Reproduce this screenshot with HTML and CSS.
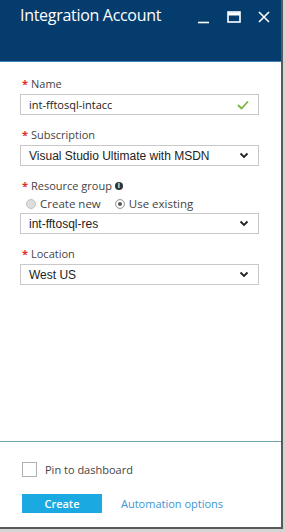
FILE: index.html
```html
<!DOCTYPE html>
<html lang="en">
<head>
    <meta charset="UTF-8">
    <title>Integration Account</title>
    <link rel="stylesheet" href="styles.css">
</head>
<body>

    <div id="blade">
        <div id="header">
            <div id="title">Integration Account</div>
            <div id="window-buttons">
                <svg width="14" height="14" viewBox="0 0 14 14"><path d="M1 12.5h11" stroke="#fff" stroke-width="1.6"/></svg>
                <svg width="14" height="14" viewBox="0 0 14 14"><rect x="1" y="2" width="12" height="10" fill="none" stroke="#fff" stroke-width="1.6"/><path d="M1 4h12" stroke="#fff" stroke-width="3"/></svg>
                <svg width="14" height="14" viewBox="0 0 14 14"><path d="M2 2l10 10M12 2L2 12" stroke="#fff" stroke-width="1.6"/></svg>
            </div>
        </div>

        <div id="form">
            <div class="field">
                <div class="field-label"><span class="req">*</span> Name</div>
                <div class="box">
                    <span>int-fftosql-intacc</span>
                    <svg width="12" height="10" viewBox="0 0 12 10"><path d="M1 5l3.5 3.5L11 1.5" fill="none" stroke="#7cb342" stroke-width="1.8"/></svg>
                </div>
            </div>

            <div class="field">
                <div class="field-label"><span class="req">*</span> Subscription</div>
                <div class="box select">
                    <span>Visual Studio Ultimate with MSDN</span>
                    <svg class="chevron" width="10" height="7" viewBox="0 0 10 7"><path d="M1.5 1.5L5 5l3.5-3.5" fill="none" stroke="#222" stroke-width="1.8"/></svg>
                </div>
            </div>

            <div class="field">
                <div class="field-label"><span class="req">*</span> Resource group <span class="info">i</span></div>
                <div class="radios">
                    <span class="radio"><span class="dot"></span>Create new</span>
                    <span class="radio checked"><span class="dot"></span>Use existing</span>
                </div>
                <div class="box select">
                    <span>int-fftosql-res</span>
                    <svg class="chevron" width="10" height="7" viewBox="0 0 10 7"><path d="M1.5 1.5L5 5l3.5-3.5" fill="none" stroke="#222" stroke-width="1.8"/></svg>
                </div>
            </div>

            <div class="field">
                <div class="field-label"><span class="req">*</span> Location</div>
                <div class="box select">
                    <span>West US</span>
                    <svg class="chevron" width="10" height="7" viewBox="0 0 10 7"><path d="M1.5 1.5L5 5l3.5-3.5" fill="none" stroke="#222" stroke-width="1.8"/></svg>
                </div>
            </div>
        </div>

        <div id="footer">
            <label class="pin"><span class="checkbox"></span>Pin to dashboard</label>
            <div class="actions">
                <div class="create-btn">Create</div>
                <a class="automation">Automation options</a>
            </div>
        </div>
    </div>

</body>
</html>
```

FILE: styles.css
```css
 body {
     margin: 0;
     padding: 0;
     background-color: #d4d4d4;
     font-family: 'Open Sans', 'Noto Sans', sans-serif;
     color: #333;
 }

 #blade {
     width: 281px;
     height: 527px;
     background-color: #fff;
     border-right: 2px solid #595959;
     border-bottom: 2px solid #595959;
     display: flex;
     flex-direction: column;
 }

 #header {
     background-color: #053c6e;
     border-bottom: 1px solid #3f86bf;
     display: flex;
     justify-content: space-between;
     align-items: flex-start;
     padding: 4px 10px 0 20px;
     box-sizing: border-box;
     height: 62px;
 }

 #title {
     color: #fff;
     font-size: 16px;
     font-weight: 400;
     letter-spacing: -0.3px;
 }

 #window-buttons {
     display: flex;
     gap: 16px;
     padding-top: 6px;
 }

 #form {
     flex: 1;
     padding: 14px 22px 0 20px;
 }

 .field {
     margin-bottom: 12px;
 }

 .field-label {
     font-size: 11px;
     color: #444;
     margin: 0 0 3px 2px;
     display: flex;
     align-items: center;
     gap: 3px;
 }

 .req {
     color: #d9302c;
     font-weight: bold;
 }

 .info {
     width: 8px;
     height: 8px;
     border-radius: 50%;
     background-color: #333;
     color: #fff;
     font-size: 7px;
     font-weight: bold;
     text-align: center;
     line-height: 8px;
 }

 .box {
     height: 21px;
     box-sizing: border-box;
     border: 1px solid #c8c8c8;
     display: flex;
     align-items: center;
     justify-content: space-between;
     padding: 0 9px 0 8px;
     font-size: 11px;
     color: #222;
 }

 .select {
     font-family: 'Liberation Sans', Arial, sans-serif;
     font-size: 12px;
 }

 .radios {
     display: flex;
     gap: 14px;
     font-size: 11.5px;
     color: #444;
     margin: 1px 0 2px 6px;
 }

 .radio {
     display: flex;
     align-items: center;
     gap: 4px;
 }

 .dot {
     width: 10px;
     height: 10px;
     border-radius: 50%;
     border: 1px solid #c0c0c0;
     background-color: #ddd;
     box-sizing: border-box;
 }

 .radio.checked .dot {
     background-color: #fff;
     border-color: #999;
     box-shadow: inset 0 0 0 2px #fff, inset 0 0 0 4px #555;
 }

 #footer {
     border-top: 1px solid #6fa3ad;
     padding: 20px 20px 0 22px;
     height: 86px;
     box-sizing: border-box;
 }

 .pin {
     display: flex;
     align-items: center;
     gap: 8px;
     font-size: 11px;
     color: #444;
 }

 .checkbox {
     width: 15px;
     height: 15px;
     border: 1px solid #b0b0b0;
     box-sizing: border-box;
 }

 .actions {
     display: flex;
     align-items: center;
     gap: 19px;
     margin-top: 17px;
 }

 .create-btn {
     width: 80px;
     height: 19px;
     background-color: #1aa9e0;
     color: #fff;
     font-size: 11px;
     font-weight: 600;
     text-align: center;
     line-height: 19px;
 }

 .automation {
     color: #3b95d3;
     font-size: 11px;
 }
```
